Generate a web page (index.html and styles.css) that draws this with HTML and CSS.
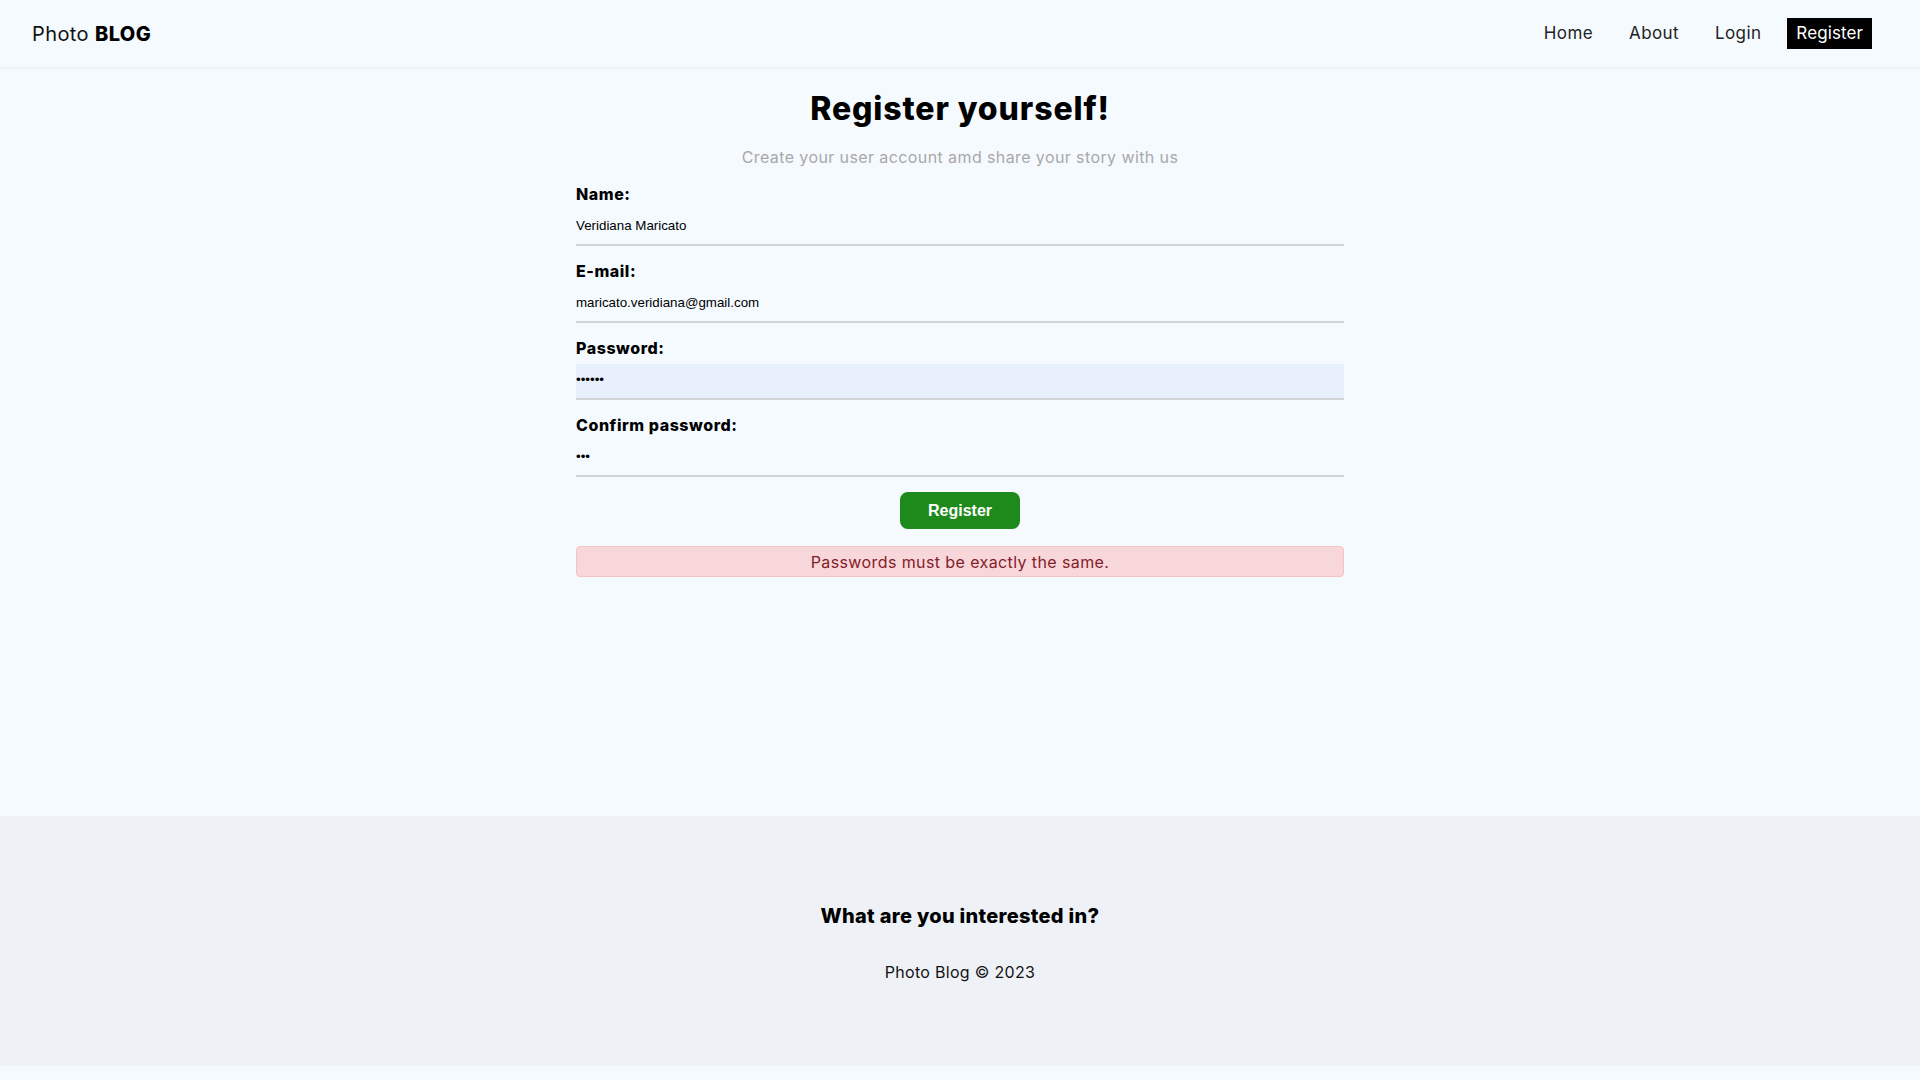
FILE: index.html
```html
<!DOCTYPE html>
<html lang="en">
<head>
<meta charset="utf-8">
<title>Photo Blog - Register</title>
<link rel="stylesheet" href="styles.css">
</head>
<body>
<header class="topbar">
  <a class="brand" href="#">Photo <b>BLOG</b></a>
  <nav class="nav">
    <a href="#" class="nav-link">Home</a>
    <a href="#" class="nav-link">About</a>
    <a href="#" class="nav-link">Login</a>
    <a href="#" class="nav-link active">Register</a>
  </nav>
</header>
<main class="main">
  <section class="register">
    <h1 class="title">Register yourself!</h1>
    <p class="subtitle">Create your user account amd share your story with us</p>
    <form class="form">
      <div class="field">
        <label class="label" for="name">Name:</label>
        <input class="input" id="name" type="text" value="Veridiana Maricato">
      </div>
      <div class="field">
        <label class="label" for="email">E-mail:</label>
        <input class="input" id="email" type="email" value="maricato.veridiana@gmail.com">
      </div>
      <div class="field">
        <label class="label" for="pw">Password:</label>
        <input class="input input-autofill" id="pw" type="password" value="123456">
      </div>
      <div class="field">
        <label class="label" for="pw2">Confirm password:</label>
        <input class="input" id="pw2" type="password" value="123">
      </div>
      <div class="actions">
        <button class="btn" type="button">Register</button>
      </div>
      <div class="alert">Passwords must be exactly the same.</div>
    </form>
  </section>
</main>
<footer class="footer">
  <h3 class="footer-title">What are you interested in?</h3>
  <p class="copyright">Photo Blog © 2023</p>
</footer>
</body>
</html>
```
FILE: styles.css
```css
* { box-sizing: border-box; }
html, body { margin: 0; padding: 0; }
body {
  background: #f5faff;
  font-family: "Inter", "Open Sans", sans-serif;
  color: #111;
  padding-bottom: 14px;
}
a { text-decoration: none; color: inherit; }

.topbar {
  height: 67px;
  display: flex;
  align-items: center;
  justify-content: space-between;
  padding: 0 48px 0 32px;
  background: #f5faff;
  box-shadow: 0 1px 3px rgba(0, 0, 0, 0.07);
  position: relative;
}
.brand {
  font-size: 20px;
  line-height: 24px;
  color: #111;
  letter-spacing: 0.4px;
}
.brand b { font-weight: 800; color: #000; }
.nav { display: flex; gap: 16px; align-items: center; }
.nav-link {
  font-size: 17px;
  line-height: 19px;
  padding: 6px 10px;
  color: #222;
  letter-spacing: 0.4px;
}
.nav-link.active { background: #000; color: #fff; padding: 6px 9px; letter-spacing: 0.1px; }

.main { min-height: 749px; }
.register {
  width: 768px;
  margin: 0 auto;
  padding-top: 22px;
}
.title {
  margin: 0;
  text-align: center;
  font-size: 32px;
  line-height: 39px;
  font-weight: 800;
  color: #000;
  letter-spacing: 0.9px;
}
.subtitle {
  margin: 17px 0 0;
  text-align: center;
  font-size: 16px;
  line-height: 24px;
  color: #a8a8a8;
  letter-spacing: 0.4px;
}
.form { margin-top: 12px; display: flex; flex-direction: column; }
.field { display: flex; flex-direction: column; gap: 4px; }
.field + .field { margin-top: 12px; }
.label {
  font-size: 16px;
  line-height: 24px;
  font-weight: 800;
  color: #000;
  letter-spacing: 0.55px;
  padding-top: 1px;
}
.input {
  height: 36px;
  border: none;
  border-bottom: 2px solid #d2d4d8;
  background: transparent;
  padding: 0 0 3px;
  font-family: "Liberation Sans", Arial, sans-serif;
  font-size: 13.33px;
  color: #000;
  outline: none;
}
.input-autofill { background: #e8f0fe; }

.actions { display: flex; justify-content: center; margin-top: 15px; }
.btn {
  width: 120px;
  height: 37px;
  border: none;
  border-radius: 8px;
  background: #1d8a1b;
  color: #fff;
  font-family: "Liberation Sans", Arial, sans-serif;
  font-size: 16px;
  font-weight: 700;
}
.alert {
  margin-top: 17px;
  height: 31px;
  display: flex;
  align-items: center;
  justify-content: center;
  background: #f8d7da;
  border: 1px solid #f5c2c7;
  border-radius: 4px;
  color: #842029;
  font-size: 16px;
  letter-spacing: 0.4px;
}

.footer {
  background: #eef2f6;
  height: 250px;
  padding-top: 86px;
  text-align: center;
}
.footer-title {
  margin: 0;
  font-size: 20px;
  line-height: 28px;
  font-weight: 800;
  color: #000;
  letter-spacing: 0.3px;
}
.copyright {
  margin: 30px 0 0;
  font-size: 16px;
  line-height: 24px;
  color: #111;
  letter-spacing: 0.3px;
}
```
